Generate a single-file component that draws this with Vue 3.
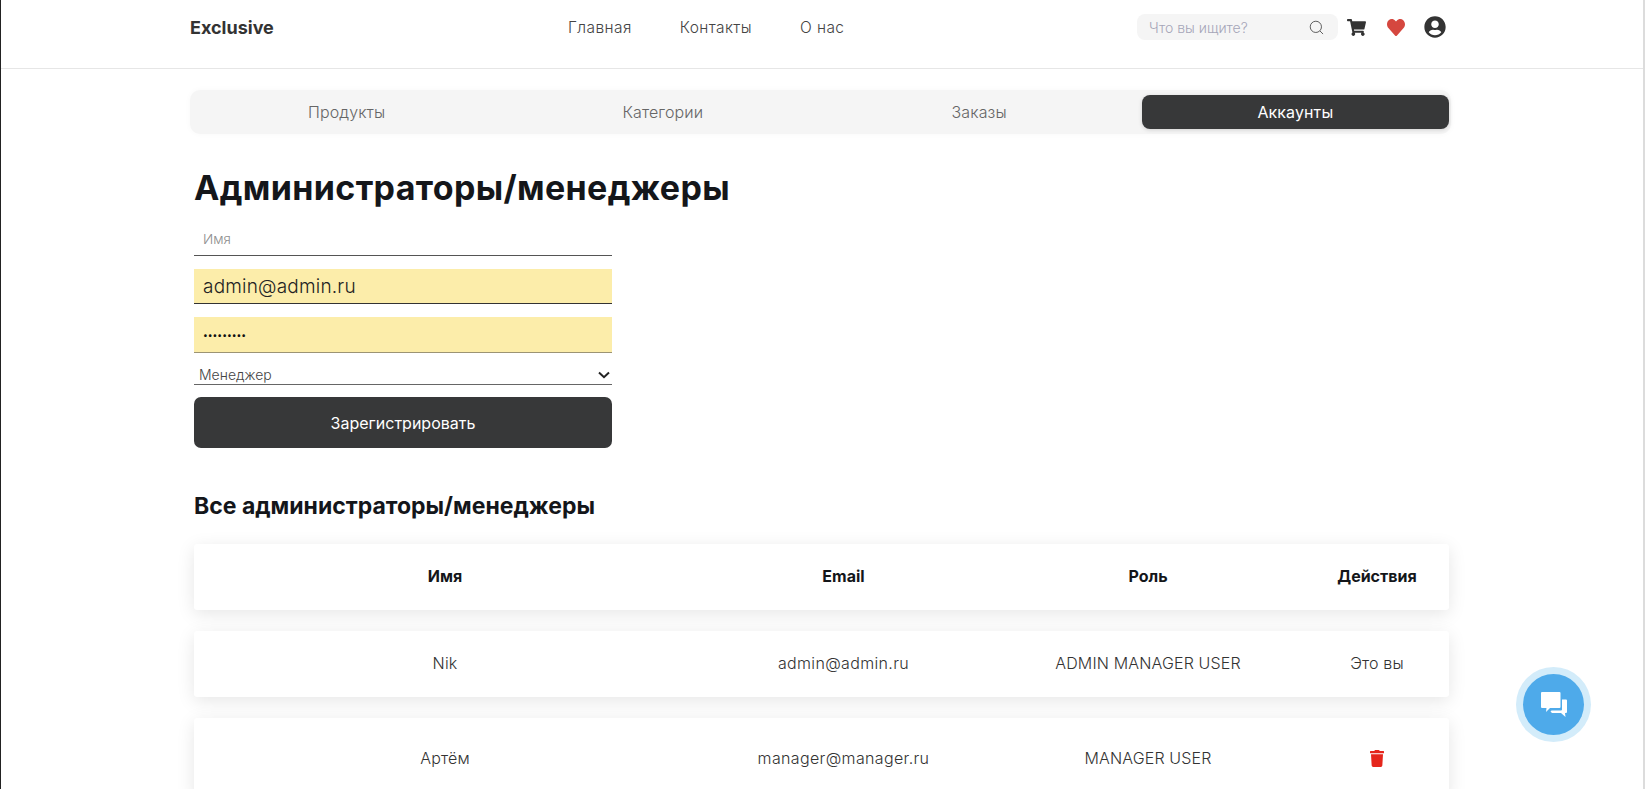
<script setup>
const tabs = [
  { label: 'Продукты' },
  { label: 'Категории' },
  { label: 'Заказы' },
  { label: 'Аккаунты', active: true },
]
const links = ['Главная', 'Контакты', 'О нас']
const users = [
  { name: 'Nik', email: 'admin@admin.ru', role: 'ADMIN MANAGER USER', self: true },
  { name: 'Артём', email: 'manager@manager.ru', role: 'MANAGER USER', self: false },
]
</script>

<template>
  <div class="page">
    <header class="header">
      <div class="logo">Exclusive</div>
      <nav class="nav">
        <a v-for="l in links" :key="l">{{ l }}</a>
      </nav>
      <div class="tools">
        <div class="search">
          <span>Что вы ищите?</span>
          <svg width="15" height="15" viewBox="0 0 16 16" fill="none" stroke="#555" stroke-width="1"><circle cx="7.3" cy="7.3" r="6"/><path d="M11.700 11.700 15 15"/></svg>
        </div>
        <svg class="cart" width="19" height="17" viewBox="0 0 576 512" fill="#333"><path d="M528 301.3l47.3-208C578.7 78.300 567.300 64 552 64H159.200l-9.200-44.800C147.800 8 137.900 0 126.500 0H24C10.700 0 0 10.700 0 24v16c0 13.300 10.700 24 24 24h69.900l70.200 343.400C147.300 417.100 136 435.200 136 456c0 30.900 25.100 56 56 56s56-25.100 56-56c0-15.700-6.400-29.800-16.800-40h209.600C430.400 426.200 424 440.300 424 456c0 30.900 25.100 56 56 56s56-25.100 56-56c0-22.200-12.900-41.300-31.600-50.400l5.500-24.300c3.400-15-8-29.300-23.400-29.300H218.100l-6.500-32h293c11.200 0 20.900-7.800 23.400-18.700z"/></svg>
        <svg class="heart" width="18" height="17" viewBox="0 32 512 448" preserveAspectRatio="none" fill="#d5473f"><path d="M462.300 62.600C407.500 15.900 326 24.300 275.700 76.200L256 96.500l-19.700-20.300C186.100 24.300 104.500 15.900 49.700 62.600c-62.800 53.600-66.100 149.800-9.900 207.900l193.500 199.800c12.500 12.900 32.800 12.900 45.300 0l193.500-199.800c56.300-58.100 53-154.300-9.800-207.900z"/></svg>
        <svg class="user" width="22" height="22" viewBox="0 0 496 512" fill="#333"><path d="M248 8C111 8 0 119 0 256s111 248 248 248 248-111 248-248S385 8 248 8zm0 96c48.600 0 88 39.400 88 88s-39.400 88-88 88-88-39.400-88-88 39.400-88 88-88zm0 344c-58.700 0-111.300-26.600-146.500-68.200 18.800-35.400 55.600-59.800 98.500-59.800 2.400 0 4.800.4 7.100 1.100 13 4.200 26.600 6.900 40.900 6.900 14.300 0 28-2.700 40.900-6.900 2.300-.7 4.700-1.100 7.100-1.100 42.900 0 79.700 24.400 98.500 59.800C359.300 421.400 306.700 448 248 448z"/></svg>
      </div>
    </header>

    <main class="main">
      <div class="tabs">
        <button v-for="t in tabs" :key="t.label" class="tab" :class="{ active: t.active }">{{ t.label }}</button>
      </div>

      <section class="body">
        <h1 class="title">Администраторы/менеджеры</h1>
        <form class="form" @submit.prevent>
          <input class="field name" placeholder="Имя" />
          <input class="field auto email" value="admin@admin.ru" />
          <input class="field auto pass" type="password" value="password1" />
          <div class="select">
            <span>Менеджер</span>
            <svg width="12" height="8" viewBox="0 0 12 8" fill="none" stroke="#222" stroke-width="2"><path d="M1 1.500 6 6.200 11 1.500"/></svg>
          </div>
          <button class="submit">Зарегистрировать</button>
        </form>

        <h2 class="subtitle">Все администраторы/менеджеры</h2>

        <div class="rows">
          <div class="row head">
            <div>Имя</div><div>Email</div><div>Роль</div><div>Действия</div>
          </div>
          <div v-for="u in users" :key="u.email" class="row" :class="{ tall: !u.self }">
            <div>{{ u.name }}</div>
            <div class="mail">{{ u.email }}</div>
            <div>{{ u.role }}</div>
            <div>
              <template v-if="u.self">Это вы</template>
              <svg v-else class="trash" width="14" height="17" viewBox="0 0 448 512" preserveAspectRatio="none" fill="#e5261c"><path d="M432 32H312l-9.400-18.700A24 24 0 0 0 281.100 0H166.800a23.700 23.700 0 0 0-21.400 13.300L136 32H16A16 16 0 0 0 0 48v32a16 16 0 0 0 16 16h416a16 16 0 0 0 16-16V48a16 16 0 0 0-16-16zM53.200 467a48 48 0 0 0 47.900 45h245.800a48 48 0 0 0 47.900-45L416 128H32z"/></svg>
            </div>
          </div>
        </div>
      </section>
    </main>

    <button class="chat">
      <svg width="26" height="26" viewBox="0 0 26 26" fill="#fff"><path d="M1 0h17.500a1 1 0 0 1 1 1v14a1 1 0 0 1-1 1H9l-4 4 .5-4H1a1 1 0 0 1-1-1V1a1 1 0 0 1 1-1z"/><path d="M21 7.500h4a1 1 0 0 1 1 1V20a1 1 0 0 1-1 1h-1l.5 4-4.500-4H11l-1.500-1.500 1-1H20a1 1 0 0 0 1-1z"/></svg>
    </button>
  </div>
</template>

<style scoped>
.page {
  position: relative;
  height: 789px;
  overflow: hidden;
  box-sizing: border-box;
  border-left: 1px solid #222;
  border-right: 2px solid #dcdcdc;
  background: #fff;
  font-family: "Inter", "Noto Sans", sans-serif;
  color: #333;
}
.header {
  height: 68px;
  border-bottom: 1px solid #e6e6e6;
  padding: 0 189px;
  display: flex;
  align-items: center;
  position: relative;
}
.logo {
  font-size: 18px;
  font-weight: 700;
  color: #333;
  margin-top: -13px;
  width: 378px;
}
.nav {
  display: flex;
  gap: 48px;
  font-size: 15.500px;
  font-weight: 300;
  letter-spacing: .4px;
  color: #444;
  margin-top: -13px;
}
.tools {
  margin-left: auto;
  display: flex;
  align-items: center;
  margin-top: -14px;
  margin-right: 8px;
}
.search {
  width: 201px;
  height: 26px;
  box-sizing: border-box;
  background: #f5f5f5;
  border-radius: 8px;
  display: flex;
  align-items: center;
  justify-content: space-between;
  padding: 0 14px 0 12px;
  font-size: 14px;
  font-weight: 300;
  color: #a5a5b8;
}
.cart { margin-left: 9px; }
.heart { margin-left: 21px; }
.user { margin-left: 19px; }
.main { padding: 21px 192px 0 189px; }
.tabs {
  height: 44px;
  box-sizing: border-box;
  background: #f5f5f5;
  border-radius: 10px;
  padding: 5px 2px 5px 3px;
  display: grid;
  grid-template-columns: repeat(4, 1fr);
  gap: 9px;
  box-shadow: 0 0 6px rgba(0,0,0,.03);
}
.tab {
  border: 0;
  background: transparent;
  font: inherit;
  font-size: 16px;
  font-weight: 300;
  letter-spacing: .1px;
  color: #666;
  border-radius: 8px;
  padding: 0;
}
.tab.active {
  background: #373839;
  color: #fff;
  font-weight: 400;
  box-shadow: 0 1px 4px rgba(0,0,0,.15);
}
.body { padding: 0 2px 0 4px; }
.title {
  margin: 33px 0 0;
  font-size: 34px;
  line-height: 42px;
  font-weight: 700;
  letter-spacing: .35px;
  color: #14161a;
}
.form {
  width: 418px;
  display: flex;
  flex-direction: column;
  margin-top: 16px;
}
.field {
  display: block;
  box-sizing: border-box;
  width: 100%;
  border: 0;
  border-bottom: 1px solid #555;
  outline: none;
  background: transparent;
  font: inherit;
  padding: 0 9px;
}
.name {
  height: 31px;
  padding-bottom: 2px;
  font-size: 13.500px;
  font-weight: 300;
}
.name::placeholder { color: #8d8d8d; }
.auto {
  background: #fcedaa;
  margin-top: 13px;
  height: 35px;
  font-size: 19px;
  font-weight: 300;
  letter-spacing: .2px;
  color: #222;
  border-bottom-color: #333;
}
.pass {
  height: 36px;
  font-size: 8.500px;
  font-weight: 400;
  letter-spacing: 0;
  color: #111;
  border-bottom-color: #9c9474;
}
.select {
  margin-top: 12px;
  height: 20px;
  box-sizing: border-box;
  border-bottom: 1px solid #666;
  display: flex;
  align-items: center;
  justify-content: space-between;
  padding: 0 2px 0 5px;
  font-size: 14px;
  font-weight: 300;
  color: #444;
}
.submit {
  margin-top: 12px;
  height: 51px;
  border: 0;
  border-radius: 7px;
  background: #373839;
  color: #fff;
  font: inherit;
  font-size: 16px;
  font-weight: 400;
}
.subtitle {
  margin: 44px 0 0;
  font-size: 23px;
  line-height: 28px;
  font-weight: 700;
  color: #14161a;
}
.rows {
  margin-top: 24px;
  display: flex;
  flex-direction: column;
  gap: 21px;
}
.row {
  height: 66px;
  box-sizing: border-box;
  padding-bottom: 2px;
  flex: none;
  display: grid;
  grid-template-columns: 502px 295px 314px 1fr;
  align-items: center;
  text-align: center;
  border-radius: 3px;
  background: #fff;
  box-shadow: 0 4px 18px rgba(0,0,0,.1);
  font-size: 16px;
  font-weight: 300;
  letter-spacing: .15px;
  color: #333;
}
.mail { letter-spacing: .35px; }
.row.tall { height: 82px; }
.row.head {
  font-weight: 700;
  letter-spacing: 0;
  color: #14161a;
}
.trash { display: block; margin: 0 auto; }
.chat {
  position: absolute;
  left: 1522px;
  top: 674px;
  width: 61px;
  height: 61px;
  padding: 0;
  border: 0;
  border-radius: 50%;
  background: #4eaaea;
  box-shadow: 0 0 0 7px #d3ecfa;
  display: flex;
  align-items: center;
  justify-content: center;
}
.page::after {
  content: "";
  position: absolute;
  right: -2px;
  top: 0;
  width: 2px;
  height: 17px;
  background: #f2f2f2;
}
</style>
